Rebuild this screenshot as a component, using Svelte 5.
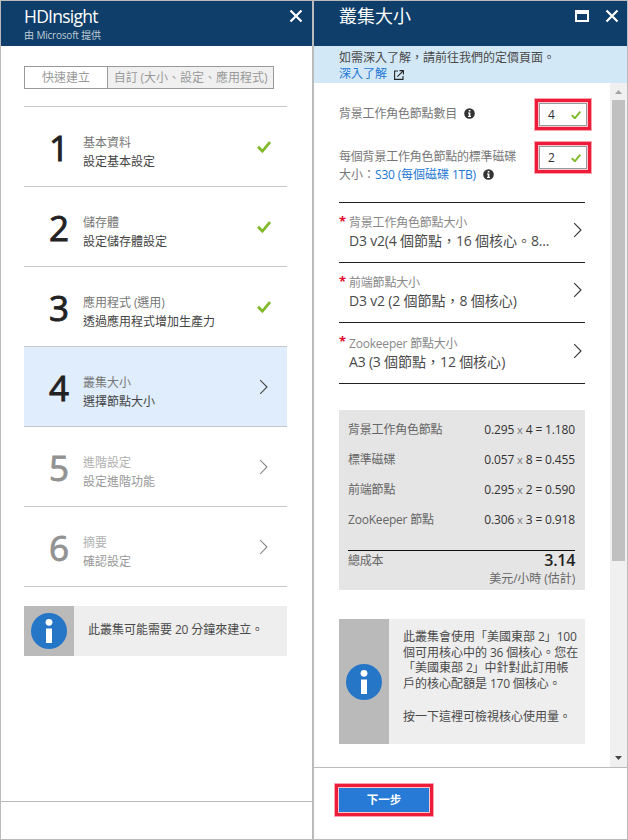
<script>
  const steps = [
    { n: 1, title: '基本資料', sub: '設定基本設定', state: 'done' },
    { n: 2, title: '儲存體', sub: '設定儲存體設定', state: 'done' },
    { n: 3, title: '應用程式 (選用)', sub: '透過應用程式增加生產力', state: 'done' },
    { n: 4, title: '叢集大小', sub: '選擇節點大小', state: 'active' },
    { n: 5, title: '進階設定', sub: '設定進階功能', state: 'todo' },
    { n: 6, title: '摘要', sub: '確認設定', state: 'todo' }
  ];
  const sizes = [
    { label: '背景工作角色節點大小', value: 'D3 v2(4 個節點，16 個核心。8...' },
    { label: '前端節點大小', value: 'D3 v2 (2 個節點，8 個核心)' },
    { label: 'Zookeeper 節點大小', value: 'A3 (3 個節點，12 個核心)' }
  ];
  const costs = [
    ['背景工作角色節點', '0.295', '4', '1.180'],
    ['標準磁碟', '0.057', '8', '0.455'],
    ['前端節點', '0.295', '2', '0.590'],
    ['ZooKeeper 節點', '0.306', '3', '0.918']
  ];
  // Latin runs are set slightly tighter than the Chinese text around them.
  const runs = (s) => s.match(/[\x20-\x7e]+|[^\x20-\x7e]+/g) ?? [];
  const isLatin = (s) => /^[\x20-\x7e]/.test(s);
</script>

{#snippet mix(text)}{#each runs(text) as r}{#if isLatin(r)}<span class="lat">{r}</span>{:else}{r}{/if}{/each}{/snippet}

{#snippet close()}
  <svg class="close" width="14" height="14" viewBox="0 0 14 14"><path d="M1.5 1.5 12.5 12.5M12.5 1.5 1.5 12.5" fill="none" stroke="#fff" stroke-width="2.2" /></svg>
{/snippet}

{#snippet check(w)}
  <svg class="check" width={w} height={w * 12 / 14} viewBox="0 0 14 12"><path d="M1 5.8 5.4 10.2 13 1" fill="none" stroke="#7fba28" stroke-width="2.7" /></svg>
{/snippet}

{#snippet chevron()}
  <svg class="chev" width="10" height="16" viewBox="0 0 10 16"><path d="M1.2 1.2 8 8 1.2 14.8" fill="none" stroke="currentColor" stroke-width="1.1" /></svg>
{/snippet}

{#snippet bigInfo()}
  <svg width="36" height="36" viewBox="0 0 36 36"><circle cx="18" cy="18" r="18" fill="#2676c8" /><circle cx="18" cy="9.3" r="3.4" fill="#fff" /><path d="M15 15.5h6V30h-6z" fill="#fff" /></svg>
{/snippet}

{#snippet smallInfo()}
  <svg class="tip" width="11" height="11" viewBox="0 0 11 11"><circle cx="5.5" cy="5.5" r="5.3" fill="#333" /><path d="M4.7 1.9h1.7v1.5H4.7zM4 4.4h2.4v3.7H7v1H4v-1h.7V5.4H4z" fill="#fff" /></svg>
{/snippet}

<div class="app">
  <section class="left">
    <header>
      <div>
        <h1 class="hd">HDInsight</h1>
        <p class="by">{@render mix('由 Microsoft 提供')}</p>
      </div>
      {@render close()}
    </header>
    <div class="body">
      <div class="tabs">
        <button>快速建立</button>
        <button class="custom">{@render mix('自訂 (大小、設定、應用程式)')}</button>
      </div>
      <ul>
        {#each steps as s}
          <li class={s.state}>
            <span class="num">{s.n}</span>
            <div class="txt">
              <p class="t">{@render mix(s.title)}</p>
              <p class="s">{s.sub}</p>
            </div>
            {#if s.state === 'done'}{@render check(14)}{:else}{@render chevron()}{/if}
          </li>
        {/each}
      </ul>
      <div class="note">
        <div class="ico">{@render bigInfo()}</div>
        <p>{@render mix('此叢集可能需要 20 分鐘來建立。')}</p>
      </div>
    </div>
    <footer></footer>
  </section>

  <section class="right">
    <header>
      <h1>叢集大小</h1>
      <svg class="max" width="14" height="12" viewBox="0 0 14 12"><path d="M0 0h14v12H0zM2 4v6h10V4z" fill="#fff" fill-rule="evenodd" /></svg>
      {@render close()}
    </header>
    <div class="banner">
      <p>如需深入了解，請前往我們的定價頁面。</p>
      <p><a href="#learn">深入了解</a><svg width="10" height="10" viewBox="0 0 10 10"><path d="M4 1H.6v8.4H9V6M5.5.6h3.9v3.9M9.2.8 3.4 6.6" fill="none" stroke="#222" stroke-width="1.1" /></svg></p>
    </div>
    <div class="scroll">
      <div class="content">
        <div class="field">
          <p><span class="tight">背景工作角色節點數目</span>{@render smallInfo()}</p>
          <div class="mark"><div class="inp"><span>4</span>{@render check(10)}</div></div>
        </div>
        <div class="field second">
          <p><span class="tight">每個背景工作角色節點的標準磁碟</span><br />大小：<a href="#disk">{@render mix('S30 (每個磁碟 1TB)')}</a>{@render smallInfo()}</p>
          <div class="mark"><div class="inp"><span>2</span>{@render check(10)}</div></div>
        </div>
        <div class="sizes">
          {#each sizes as z}
            <div class="size">
              <span class="star">*</span>
              <div class="txt">
                <p class="l tight">{@render mix(z.label)}</p>
                <p class="v">{@render mix(z.value)}</p>
              </div>
              {@render chevron()}
            </div>
          {/each}
        </div>
        <div class="cost">
          {#each costs as [name, a, b, c]}
            <div class="line"><span class="tight">{@render mix(name)}</span><span class="calc">{a} <i>x</i> {b} = {c}</span></div>
          {/each}
          <div class="total"><span class="tight">總成本</span><b>3.14</b></div>
          <p class="unit">{@render mix('美元/小時 (估計)')}</p>
        </div>
        <div class="note quota">
          <div class="ico">{@render bigInfo()}</div>
          <div class="lines">
            <p>{@render mix('此叢集會使用「美國東部 2」100')}<br />{@render mix('個可用核心中的 36 個核心。您在')}<br />{@render mix('「美國東部 2」中針對此訂用帳')}<br />{@render mix('戶的核心配額是 170 個核心。')}</p>
            <p class="click">按一下這裡可檢視核心使用量。</p>
          </div>
        </div>
      </div>
      <div class="bar">
        <svg width="17" height="17" viewBox="0 0 17 17"><path d="M5 11 8.5 7 12 11z" fill="#a3a3a3" /></svg>
        <div class="thumb"></div>
        <svg width="17" height="17" viewBox="0 0 17 17"><path d="M5 6h7L8.5 10z" fill="#444" /></svg>
      </div>
    </div>
    <footer>
      <div class="mark"><button class="next">下一步</button></div>
    </footer>
  </section>
</div>

<style>
  :global(body) { margin: 0; }
  .app {
    box-sizing: border-box;
    width: 628px;
    height: 840px;
    display: flex;
    border: 1px solid #bbb;
    background: #fff;
    font: 12px/16px 'Open Sans', 'Noto Sans CJK TC', sans-serif;
    color: #4a4a4a;
    overflow: hidden;
    white-space: nowrap;
  }
  .app * { box-sizing: border-box; }
  p, h1, ul { margin: 0; padding: 0; font-weight: 400; }
  svg { display: block; flex: none; }
  button { font: inherit; padding: 0; margin: 0; border: 0; }
  a { color: #2277d4; text-decoration: none; }
  .lat { letter-spacing: -0.2px; }
  .tight { letter-spacing: -0.2px; }
  section { display: flex; flex-direction: column; }
  .left { width: 311px; }
  .right { width: 315px; border-left: 2px solid #bbb; }
  header { height: 45px; background: #0e3e69; color: #fff; display: flex; flex: none; align-items: flex-start; }
  .left header { padding: 0 9px 0 23px; }
  .right header { padding: 0 8px 0 25px; }
  header h1 { font-size: 18px; line-height: 24px; padding-top: 3px; }
  header .hd { font-size: 17.5px; letter-spacing: -0.75px; }
  .by { font-size: 10px; line-height: 12px; color: #c0ccd8; }
  .hd + .by { padding-top: 1px; }
  .close { margin: 8px 0 0 auto; }
  .right .close { margin-left: 16px; }
  .max { margin: 9px 0 0 auto; }
  .body { flex: 1; padding: 20px 25px 0 23px; }
  .tabs { display: flex; width: 250px; height: 23px; border: 1px solid #999; color: #999; }
  .tabs button { width: 82px; color: inherit; background: #fff; line-height: 21px; }
  .tabs .custom { flex: 1; background: #f0f0f0; border-left: 1px solid #999; }
  ul { list-style: none; margin-top: 17px; border-top: 1px solid #c8c8c8; width: 263px; }
  li { height: 80px; display: flex; align-items: center; border-bottom: 1px solid #c8c8c8; padding: 2px 16px 0 25px; color: #444; }
  .num { width: 34px; font-size: 35px; line-height: 40px; color: #222; -webkit-text-stroke: 0.9px currentColor; }
  li .txt { flex: 1; padding-top: 9px; }
  li .t { line-height: 19px; color: #777; }
  li .s { line-height: 19px; }
  li .chev { margin: -2px 2px 0 0; }
  li .check { margin-top: -2px; }
  .active { background: #e0edfd; }
  .todo { color: #888; }
  .todo .num { color: #929292; }
  .todo .t { color: #b0b0b0; }
  .todo .s { color: #999; }
  .note { display: flex; width: 263px; height: 50px; margin-top: 19px; background: #eee; }
  .ico { width: 50px; background: #bababa; display: flex; align-items: center; justify-content: center; }
  .note > p { padding-left: 14px; line-height: 48px; }
  footer { flex: none; border-top: 1px solid #bbb; }
  .left footer { height: 38px; }
  .banner { height: 37px; background: #d3e8f6; padding: 4px 0 0 25px; flex: none; }
  .banner p { display: flex; align-items: center; }
  .banner svg { margin: 1px 0 0 7px; }
  .scroll { flex: 1; display: flex; min-height: 0; }
  .content { width: 296px; padding: 15px 25px 0 25px; }
  .bar { width: 17px; background: #f0f0f0; display: flex; flex-direction: column; align-items: center; }
  .thumb { width: 13px; height: 461px; background: #c0c0c0; margin-bottom: auto; }
  .field { display: flex; justify-content: space-between; height: 33px; margin-right: -7px; color: #777; }
  .field > p { padding-top: 8px; }
  .field.second { margin-top: 10px; }
  .second > p { line-height: 18px; padding-top: 7px; }
  .tip { display: inline-block; margin-left: 7px; vertical-align: -1px; }
  .mark { border: 3px solid #ee1c38; box-shadow: 0 0 0 1px #f9a4af, inset 0 0 0 1px #fbc5cc; padding: 1px; margin: 1px; }
  .field .mark { width: 56px; height: 31px; }
  .inp { height: 23px; border: 1px solid #949aa0; display: flex; align-items: center; justify-content: space-between; padding: 1px 5px 0 8px; color: #333; }
  .sizes { border-top: 1px solid #222; margin-top: 28px; }
  .size { height: 60px; display: flex; align-items: center; border-bottom: 1px solid #222; padding-right: 2px; }
  .size:last-child { height: 61px; }
  .star { width: 10px; color: #e00b2d; font-size: 13px; font-weight: 700; line-height: 20px; align-self: flex-start; margin-top: 8px; }
  .size .txt { flex: 1; }
  .l { color: #888; line-height: 18px; }
  .v { font-size: 14px; line-height: 20px; margin-top: -1px; }
  .size .chev { margin-top: -5px; color: #333; }
  .cost { margin-top: 26px; height: 180px; background: #e5e5e5; padding: 5px 10px 0 9px; color: #666; }
  .line { display: flex; justify-content: space-between; line-height: 30px; }
  .calc { color: #333; letter-spacing: -0.14px; }
  .calc i { font-style: normal; color: #777; font-size: 11px; }
  .total { display: flex; justify-content: space-between; border-top: 1px solid #111; margin-top: 15px; line-height: 19px; }
  .total b { font-size: 16px; font-weight: 600; color: #222; letter-spacing: -0.3px; }
  .unit { text-align: right; line-height: 18px; }
  .quota { width: auto; height: 125px; margin-top: 29px; }
  .lines { padding: 10px 0 0 14px; line-height: 15.6px; }
  .click { margin-top: 18px; }
  .right footer { height: 72px; padding: 15px 0 0 20px; }
  .right footer .mark { width: 98px; height: 32px; }
  .next { display: block; width: 90px; height: 24px; background: #277bd7; color: #fff; font-weight: 600; font-size: 11.5px; line-height: 24px; }
</style>
